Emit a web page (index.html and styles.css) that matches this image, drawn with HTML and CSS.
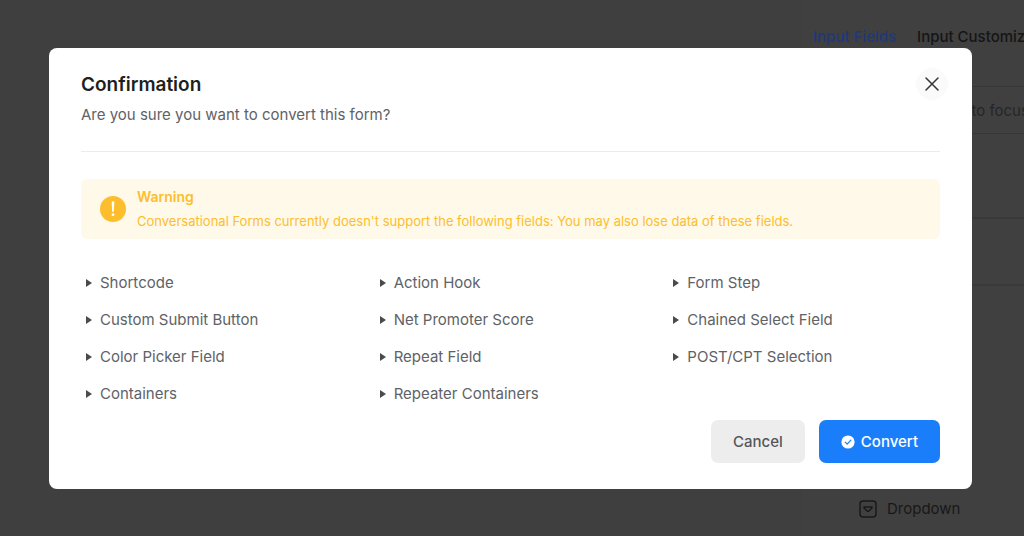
FILE: index.html
```html
<!DOCTYPE html>
<html lang="en">
<head>
  <meta charset="UTF-8" />
  <title>Form Editor</title>
  <link rel="stylesheet" href="styles.css">
</head>
<body>

<div class="editor" inert>
  <div class="canvas"></div>
  <aside class="sidebar">
    <nav class="tabs">
      <a class="active" href="#fields">Input Fields</a>
      <a href="#customization">Input Customization</a>
    </nav>
    <div class="search">
      <input type="text" aria-label="Search fields" value='Search (press "/" to focus)' />
    </div>
    <div class="group"></div>
    <div class="group"></div>
    <div class="group open">
      <button class="field">
        <svg viewBox="0 0 18 18" width="18" height="18" fill="none" stroke="currentColor" stroke-width="1.4" stroke-linejoin="round">
          <rect x="1" y="1" width="16" height="16" rx="3"/>
          <path d="M5 7h8v1L9.600 11.200h-1.200L5 8z"/>
        </svg>
        Dropdown
      </button>
    </div>
  </aside>
</div>

<div class="overlay">
  <div class="modal" role="dialog" aria-modal="true" aria-labelledby="modalTitle">
    <header class="modal-header">
      <div>
        <h1 id="modalTitle">Confirmation</h1>
        <p>Are you sure you want to convert this form?</p>
      </div>
      <button class="close" aria-label="Close">
        <svg viewBox="0 0 16 16" width="16" height="16" fill="none" stroke="currentColor" stroke-width="1.5" stroke-linecap="round">
          <path d="M2 2l12 12M14 2L2 14"/>
        </svg>
      </button>
    </header>

    <div class="alert">
      <svg viewBox="0 0 26 26" width="26" height="26">
        <circle cx="13" cy="13" r="13" fill="#fcbe2d"/>
        <path d="M11.700 6.500a1.300 1.300 0 0 1 2.600 0l-.4 8.500a.9.9 0 0 1-1.800 0z" fill="#fff"/>
        <circle cx="13" cy="18.700" r="1.400" fill="#fff"/>
      </svg>
      <div>
        <h2>Warning</h2>
        <p>Conversational Forms currently doesn't support the following fields: You may also lose data of these fields.</p>
      </div>
    </div>

    <ul class="fields">
      <li>Shortcode</li>
      <li>Action Hook</li>
      <li>Form Step</li>
      <li>Custom Submit Button</li>
      <li>Net Promoter Score</li>
      <li>Chained Select Field</li>
      <li>Color Picker Field</li>
      <li>Repeat Field</li>
      <li>POST/CPT Selection</li>
      <li>Containers</li>
      <li>Repeater Containers</li>
    </ul>

    <footer class="actions">
      <button class="btn">Cancel</button>
      <button class="btn primary">
        <svg viewBox="0 0 14 14" width="14" height="14">
          <circle cx="7" cy="7" r="6.600" fill="#fff"/>
          <path d="M4.200 7.200l2 2 3.700-4" fill="none" stroke="#1a7efb" stroke-width="1.200" stroke-linecap="round" stroke-linejoin="round"/>
        </svg>
        Convert
      </button>
    </footer>
  </div>
</div>

</body>
</html>
```

FILE: styles.css
```css
* {
  box-sizing: border-box;
}
body {
  margin: 0;
  font-family: Inter, sans-serif;
  font-size: 15px;
  line-height: 20px;
  background: #404040;
  color: #606266;
  overflow: hidden;
}
h1, h2, p, ul {
  margin: 0;
  padding: 0;
}
button {
  font: inherit;
  border: none;
  cursor: pointer;
}
svg {
  display: block;
  flex: none;
}

/* editor behind the dialog */
.editor {
  display: grid;
  grid-template-columns: 1fr 222px;
  min-height: 100vh;
  color: #181818;
}
.canvas {
  background: #3f3f3f;
}
.sidebar {
  padding-left: 11px;
  white-space: nowrap;
  overflow: hidden;
}
.tabs {
  display: flex;
  gap: 21px;
  padding: 27px 0 25px;
  font-weight: 500;
}
.tabs a {
  color: #151515;
  text-decoration: none;
}
.tabs a.active {
  color: #20387c;
}
.search {
  margin: 14px 0 0 11px;
  border: 1px solid #363636;
  border-right: none;
}
.search input {
  width: 100%;
  height: 46px;
  padding: 0 0 0 20px;
  border: none;
  background: none;
  font: inherit;
  color: #262626;
}
.group {
  height: 67px;
  margin-left: 11px;
  border-bottom: 2px solid #393939;
}
.search + .group {
  margin-top: 18px;
}
.group.open {
  height: auto;
  padding: 213px 0 0 35px;
  border: none;
}
.field {
  display: flex;
  align-items: center;
  gap: 10px;
  padding: 0;
  background: none;
  color: #181818;
}

/* dialog */
.overlay {
  position: absolute;
  inset: 0;
  padding: 48px 52px 48px 49px;
}
.modal {
  padding: 25px 32px 26px;
  background: #fff;
  border-radius: 8px;
}
.modal-header {
  display: flex;
  justify-content: space-between;
  padding-bottom: 26px;
  border-bottom: 1px solid #ececec;
}
.modal-header h1 {
  margin-bottom: 8px;
  font-size: 19px;
  line-height: 24px;
  font-weight: 600;
  color: #1e1f21;
}
.close {
  display: grid;
  place-items: center;
  width: 32px;
  height: 32px;
  margin: -5px -8px 0 0;
  padding: 0;
  border-radius: 50%;
  background: #fafafa;
  color: #353537;
}
.alert {
  display: flex;
  align-items: center;
  gap: 11px;
  margin: 27px 0 34px;
  padding: 8px 19px;
  border-radius: 6px;
  background: #fff9ea;
  color: #fcbe2d;
}
.alert h2 {
  margin-bottom: 4px;
  font-size: 14px;
  line-height: 20px;
  font-weight: 600;
}
.alert p {
  font-size: 13px;
}
.fields {
  display: grid;
  grid-template-columns: repeat(3, 1fr);
  gap: 17px 22px;
  list-style: none;
}
.fields li {
  display: flex;
  align-items: center;
  gap: 8px;
  padding-left: 5px;
}
.fields li::before {
  content: "";
  border: solid transparent;
  border-width: 4px 0 4px 6px;
  border-left-color: #4a4b4f;
}
.actions {
  display: flex;
  justify-content: flex-end;
  gap: 14px;
  margin-top: 16px;
}
.btn {
  display: flex;
  align-items: center;
  gap: 6px;
  height: 43px;
  padding: 0 22px;
  border-radius: 7px;
  background: #ededed;
  color: #55565a;
  font-weight: 500;
}
.btn.primary {
  background: #1a7efb;
  color: #fff;
}
```
